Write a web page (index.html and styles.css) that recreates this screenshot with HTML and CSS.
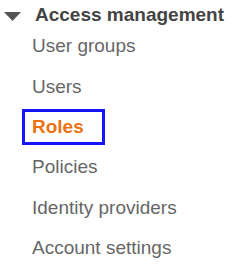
FILE: index.html
```html
<!DOCTYPE html>
<html lang="en">
<head>
    <meta charset="UTF-8">
    <title>Access management</title>
    <link rel="stylesheet" href="styles.css">
</head>
<body>

    <!-- Section heading with expanded caret -->
    <div class="nav-heading">
        <svg class="caret" width="17" height="9" viewBox="0 0 17 9">
            <polygon points="0,0 17,0 8.5,9" fill="#545454"/>
        </svg>
        <span>Access management</span>
    </div>

    <!-- Section links -->
    <ul class="nav-list">
        <li><a href="#">User groups</a></li>
        <li><a href="#">Users</a></li>
        <li><a href="#" class="active">Roles</a></li>
        <li><a href="#">Policies</a></li>
        <li><a href="#">Identity providers</a></li>
        <li><a href="#">Account settings</a></li>
    </ul>

</body>
</html>
```

FILE: styles.css
```css
body {
    margin: 0;
    font-family: "Liberation Sans", Arial, sans-serif;
    font-size: 19px;
    background-color: #fff;
}

.nav-heading {
    display: flex;
    align-items: center;
    padding: 4px 0 0 4px;
    height: 22px;
    line-height: 22px;
    font-weight: bold;
    color: #444;
}

.nav-heading .caret {
    margin-right: 14px;
    margin-top: 2px;
}

.nav-list {
    list-style: none;
    margin: 0;
    padding: 0 0 0 22px;
}

.nav-list li {
    display: flex;
    align-items: center;
    height: 40.4px;
}

.nav-list a {
    display: inline-block;
    line-height: 30px;
    padding: 0 18px 0 7px;
    border: 3px solid transparent;
    color: #666;
    text-decoration: none;
}

.nav-list a.active {
    color: #ec7211;
    font-weight: bold;
    border-color: #1414ff;
}
```
